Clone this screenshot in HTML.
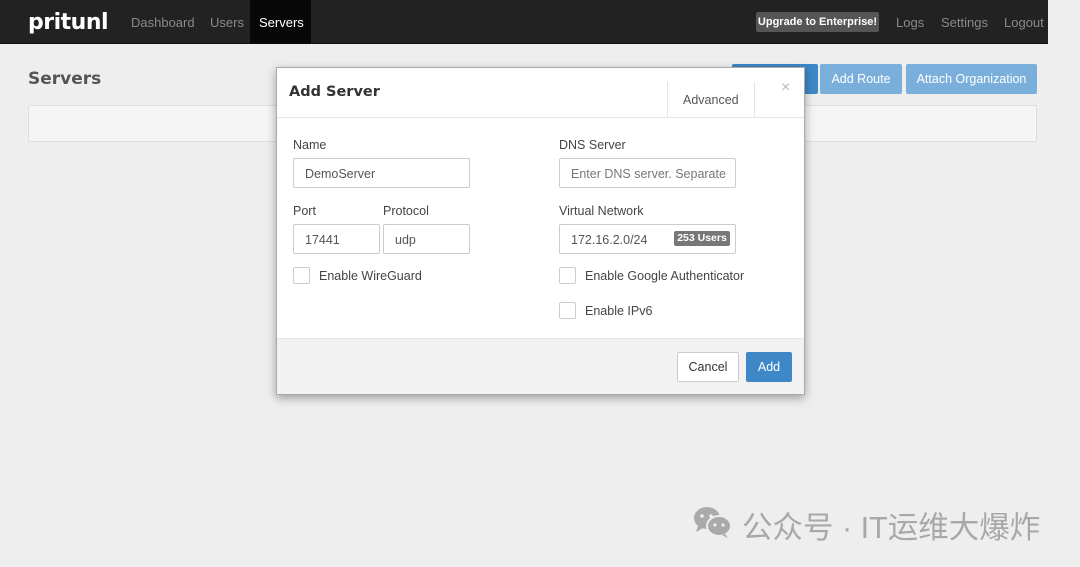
<!DOCTYPE html>
<html><head><meta charset="utf-8"><style>
*{box-sizing:border-box;margin:0;padding:0}
body{width:1080px;height:567px;overflow:hidden;background:#eeeeee;font-family:"Liberation Sans",Arial,sans-serif;position:relative;font-size:13px;color:#333}
.a{position:absolute}
.nav{left:0;top:0;width:1048px;height:44px;background:#222;border-bottom:1px solid #111}
.navt{color:#8a8a8a;font-size:13px;top:15px}
.inp{position:absolute;border:1px solid #ccc;border-radius:2px;background:#fff;height:30px;font-size:12.5px;color:#555;padding:8px 11px;white-space:nowrap;overflow:hidden}
.lbl{position:absolute;font-size:12.5px;color:#444}
.cb{position:absolute;width:17px;height:17px;border:1px solid #ccc;border-radius:2px;background:#fff}
.btn{position:absolute;height:30px;color:#fff;font-size:12.5px;text-align:center;line-height:30px;border-radius:2px}
</style></head><body>
<div class="a nav"></div>
<div class="a" style="left:28px;top:10px;font-size:22px;font-weight:bold;color:#fff;letter-spacing:-0.5px;font-family:'DejaVu Sans',sans-serif">pritunl</div>
<div class="a navt" style="left:131px">Dashboard</div>
<div class="a navt" style="left:210px">Users</div>
<div class="a" style="left:250px;top:0;width:61px;height:44px;background:#080808"></div>
<div class="a navt" style="left:259px;color:#fff">Servers</div>
<div class="a" style="left:756px;top:12px;width:123px;height:20px;background:#555;border-radius:2px;color:#fff;font-size:11px;font-weight:bold;text-align:center;line-height:20px">Upgrade to Enterprise!</div>
<div class="a navt" style="left:896px">Logs</div>
<div class="a navt" style="left:941px">Settings</div>
<div class="a navt" style="left:1004px">Logout</div>

<div class="a" style="left:28px;top:69px;font-size:17px;font-weight:bold;color:#555;font-family:'DejaVu Sans',sans-serif">Servers</div>
<div class="a" style="left:28px;top:105px;width:1009px;height:37px;background:#f5f5f5;border:1px solid #ddd;border-radius:2px"></div>
<div class="btn" style="left:732px;top:64px;width:86px;background:#3f88c8"></div>
<div class="btn" style="left:820px;top:64px;width:82px;background:#7bafdb">Add Route</div>
<div class="btn" style="left:906px;top:64px;width:131px;background:#7bafdb">Attach Organization</div>

<div class="a" style="left:276px;top:67px;width:529px;height:328px;background:#fff;border:1px solid #aaa;box-shadow:0 3px 9px rgba(0,0,0,.35)">
 <div class="a" style="left:12px;top:16px;font-size:14.5px;font-weight:bold;color:#333;font-family:'DejaVu Sans',sans-serif">Add Server</div>
 <div class="a" style="left:390px;top:14px;width:1px;height:35px;background:#e5e5e5"></div>
 <div class="a" style="left:406px;top:25px;font-size:12.5px;color:#555">Advanced</div>
 <div class="a" style="left:477px;top:14px;width:1px;height:35px;background:#e5e5e5"></div>
 <div class="a" style="left:504px;top:11px;font-size:16px;color:#bbb">×</div>
 <div class="a" style="left:0;top:49px;width:527px;height:1px;background:#e5e5e5"></div>
 <div class="lbl" style="left:16px;top:70px">Name</div>
 <div class="inp" style="left:16px;top:90px;width:177px">DemoServer</div>
 <div class="lbl" style="left:16px;top:136px">Port</div>
 <div class="lbl" style="left:106px;top:136px">Protocol</div>
 <div class="inp" style="left:16px;top:156px;width:87px">17441</div>
 <div class="inp" style="left:106px;top:156px;width:87px">udp</div>
 <div class="cb" style="left:16px;top:199px"></div>
 <div class="lbl" style="left:42px;top:201px">Enable WireGuard</div>
 <div class="lbl" style="left:282px;top:70px">DNS Server</div>
 <div class="inp" style="left:282px;top:90px;width:177px;color:#777">Enter DNS server. Separate</div>
 <div class="lbl" style="left:282px;top:136px">Virtual Network</div>
 <div class="inp" style="left:282px;top:156px;width:177px">172.16.2.0/24</div>
 <div class="a" style="left:397px;top:163px;width:56px;height:15px;background:#777;color:#fff;font-size:10.5px;font-weight:bold;text-align:center;line-height:15px;border-radius:2px">253 Users</div>
 <div class="cb" style="left:282px;top:199px"></div>
 <div class="lbl" style="left:308px;top:201px">Enable Google Authenticator</div>
 <div class="cb" style="left:282px;top:234px"></div>
 <div class="lbl" style="left:308px;top:236px">Enable IPv6</div>
 <div class="a" style="left:0;top:270px;width:527px;height:56px;background:#f2f2f2;border-top:1px solid #e5e5e5"></div>
 <div class="btn" style="left:400px;top:284px;width:62px;background:#fff;border:1px solid #ccc;color:#333;line-height:28px">Cancel</div>
 <div class="btn" style="left:469px;top:284px;width:46px;background:#3f88c8">Add</div>
</div>

<svg class="a" style="left:692px;top:505px" width="42" height="34" viewBox="0 0 42 34">
<ellipse cx="15" cy="13" rx="13" ry="11" fill="#aaa"/><path d="M6 21 L4 27 L11 23Z" fill="#aaa"/>
<ellipse cx="27" cy="21" rx="12" ry="10" fill="#aaa" stroke="#eee" stroke-width="2"/><path d="M33 29 L36 33 L30 30Z" fill="#aaa"/>
<circle cx="10" cy="11" r="1.8" fill="#eee"/><circle cx="19" cy="11" r="1.8" fill="#eee"/>
<circle cx="23" cy="20" r="1.6" fill="#eee"/><circle cx="31" cy="20" r="1.6" fill="#eee"/></svg>
<div class="a" style="left:742px;top:503px;font-size:30.5px;color:#a8a8a8;font-family:'Liberation Sans','Noto Sans CJK SC',sans-serif">公众号 · IT运维大爆炸</div>
</body></html>
